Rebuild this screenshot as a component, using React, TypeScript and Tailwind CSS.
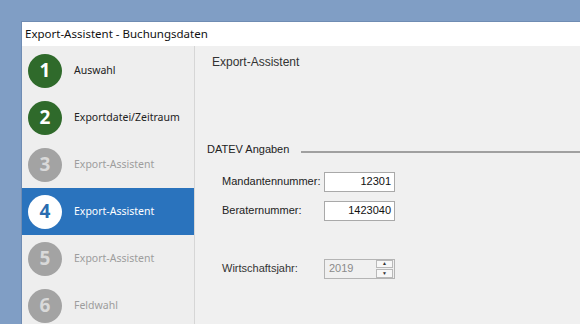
import React from "react";

type Step = { n: number; label: string; state: "done" | "active" | "todo" };

const steps: Step[] = [
  { n: 1, label: "Auswahl", state: "done" },
  { n: 2, label: "Exportdatei/Zeitraum", state: "done" },
  { n: 3, label: "Export-Assistent", state: "todo" },
  { n: 4, label: "Export-Assistent", state: "active" },
  { n: 5, label: "Export-Assistent", state: "todo" },
  { n: 6, label: "Feldwahl", state: "todo" },
];

function StepRow({ step }: { step: Step }) {
  const active = step.state === "active";
  const circle =
    step.state === "done"
      ? "bg-[#2f6a2b] text-white"
      : step.state === "active"
      ? "bg-white text-[#2a6cb0]"
      : "bg-[#a3a3a3] text-[#d9d9d9]";
  const text =
    step.state === "done" ? "text-[#222]" : step.state === "active" ? "text-white" : "text-[#9d9d9d]";
  return (
    <div className={`flex h-[47px] items-center pl-[6px] ${active ? "bg-[#2a73bd]" : ""}`}>
      <div
        className={`flex h-[34px] w-[34px] items-center justify-center rounded-full text-[19px] font-bold ${circle}`}>
        {step.n}
      </div>
      <span className={`ml-[12px] text-[10.5px] ${text}`}>{step.label}</span>
    </div>
  );
}

function Field({ label, value }: { label: string; value: string }) {
  return (
    <div className="flex h-[20px] items-center">
      <span className="w-[102px] text-[11px] text-[#222]">{label}</span>
      <div className="flex h-[20px] w-[71px] items-center justify-end border border-[#a9a9a9] bg-white pr-[3px] text-[11px] text-[#111]">
        {value}
      </div>
    </div>
  );
}

export default function App() {
  return (
    <div className="h-[324px] w-[580px] overflow-hidden bg-[#809ec5] pl-[21px] pt-[21px] font-['Noto_Sans',sans-serif]">
      <div className="flex h-[320px] w-[600px] flex-col border-t border-l border-[#6f8cb3] bg-[#efefef]">
        <div className="flex h-[24px] items-center bg-white pl-[3px] text-[11.5px] text-[#111]">
          Export-Assistent - Buchungsdaten
        </div>
        <div className="flex flex-1">
          <div className="w-[173px] border-r border-[#d6d6d6] bg-[#eeeeee] pt-[1px]">
            {steps.map((s) => (
              <StepRow key={s.n} step={s} />
            ))}
          </div>
          <div className="flex-1 bg-[#f0f0f0] font-['Liberation_Sans',sans-serif]">
            <div className="pl-[17px] pt-[7px] text-[12px] text-[#333]">Export-Assistent</div>
            <div className="mt-[70px] flex items-center pl-[12px]">
              <span className="text-[11px] text-[#222]">DATEV Angaben</span>
              <div className="ml-[12px] mt-[5px] h-[2px] flex-1 bg-[#a0a0a0]" />
            </div>
            <div className="mt-[14px] flex flex-col gap-[9px] pl-[27px]">
              <Field label="Mandantennummer:" value="12301" />
              <Field label="Beraternummer:" value="1423040" />
            </div>
            <div className="mt-[38px] flex h-[20px] items-center pl-[27px]">
              <span className="w-[102px] text-[11px] text-[#333]">Wirtschaftsjahr:</span>
              <div className="flex h-[20px] w-[71px] items-center border border-[#b4b4b4] bg-[#f0f0f0]">
                <span className="flex-1 pl-[4px] text-[11px] text-[#8a8a8a]">2019</span>
                <div className="mr-[1px] flex h-[18px] w-[17px] flex-col gap-[1px]">
                  <div className="flex flex-1 items-center justify-center border border-[#b9b9b9] bg-[#f7f7f7] text-[5px] leading-none text-[#333]">
                    ▲
                  </div>
                  <div className="flex flex-1 items-center justify-center border border-[#b9b9b9] bg-[#f7f7f7] text-[5px] leading-none text-[#333]">
                    ▼
                  </div>
                </div>
              </div>
            </div>
          </div>
        </div>
      </div>
    </div>
  );
}
